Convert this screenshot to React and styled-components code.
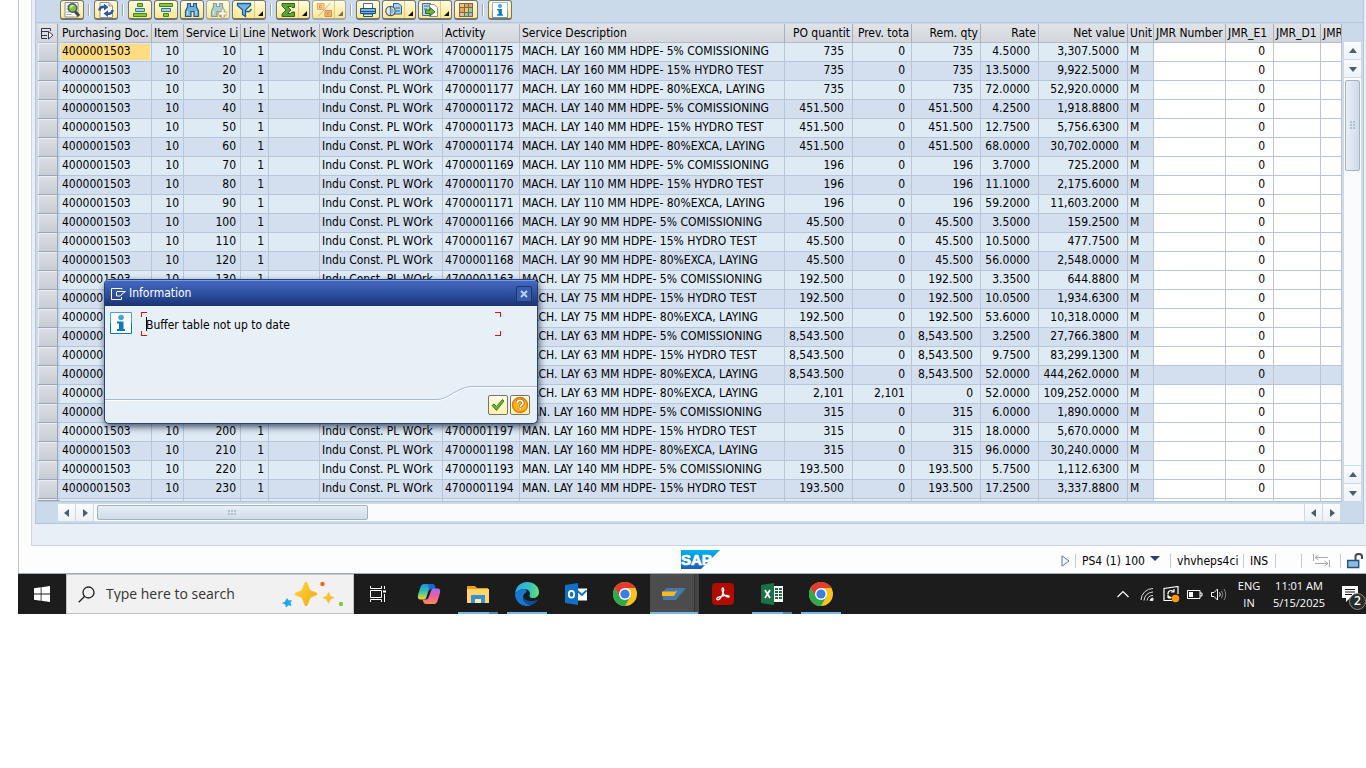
import React, { useState } from 'react'
import styled, { createGlobalStyle, css } from 'styled-components'

const GlobalStyle = createGlobalStyle`
  * { box-sizing: border-box; }
  body {
    margin: 0;
    background: #fff;
    color: #000;
    font-family: "DejaVu Sans Condensed", "Noto Sans", sans-serif;
    font-size: 12px;
    line-height: 16px;
  }
  button, input { font: inherit; margin: 0; padding: 0; }
  svg { display: block; flex: none; }
`

const Page = styled.div`
  position: relative;
  padding-left: 18px;
  overflow: hidden;
`

/* ---------- window ---------- */

const SapWindow = styled.main`
  border-left: 1px solid #b9c6cf;
  border-bottom: 1px solid #9fb0b5;
  background: #fdfdfe;
  padding-left: 12px;
`
const Panel = styled.section`
  border-left: 1px solid #ccd5e4;
  border-bottom: 1px solid #ccd5e4;
  background: #e8eff7;
  padding: 0 2px 21px 3px;
`
const Alv = styled.div`
  background: #cbdaea;
  border: 1px solid #b7c7d8;
  border-top: 0;
`
const ToolBar = styled.div`
  display: flex;
  gap: 2px;
  height: 23px;
  padding-left: 24px;
  border-bottom: 1px solid #b7c7d8;
`
const ToolButton = styled.button`
  display: flex;
  align-items: center;
  justify-content: center;
  gap: 0;
  width: ${p => (p.$split ? 34 : 24)}px;
  height: 20px;
  border: 1px solid ${p => (p.disabled ? '#a9a99f' : '#77756a')};
  border-bottom-width: 2px;
  border-radius: 3px;
  background: linear-gradient(#fffbe0, #fdf0ae 60%, #fbe793);
  ${p => p.disabled && css`svg { opacity: 0.55; }`}
`
const SplitArrow = styled.span`
  display: flex;
  align-items: flex-end;
  justify-content: flex-end;
  align-self: stretch;
  width: 9px;
  margin-left: 1px;
  padding-bottom: 2px;
  border-left: 1px solid #d9cb88;
`
const ToolDivider = styled.span`
  width: 6px;
  height: 12px;
  margin-top: 4px;
  background: linear-gradient(#9aa7b5, #9aa7b5) 2px 0 / 1px 100% no-repeat,
    linear-gradient(#fff, #fff) 3px 0 / 1px 100% no-repeat;
`

/* ---------- grid ---------- */

const GridArea = styled.div`
  display: flex;
  padding: 1px 2px 0 2px;
`
const TableClip = styled.div`
  flex: 1;
  min-width: 0;
  overflow: hidden;
  border-bottom: 1px solid #b3c2d3;
`
const Table = styled.table`
  width: 100%;
  table-layout: fixed;
  border-collapse: separate;
  border-spacing: 0;
`
const Th = styled.th`
  height: 19px;
  padding: 0 ${p => p.$pad || 0}px 0 2px;
  border-right: 1px solid #a9b0ba;
  border-bottom: 1px solid #b4bcc9;
  background: linear-gradient(#e0e3e7, #d3d6db);
  font-weight: normal;
  line-height: 18px;
  text-align: ${p => (p.$right ? 'right' : 'left')};
  white-space: nowrap;
  overflow: hidden;
`
const Td = styled.td`
  height: ${p => (p.$stub ? 2 : 19)}px;
  padding: 0 ${p => p.$pad || 0}px 0 2px;
  border-right: 1px solid #b9c5d8;
  border-bottom: ${p => (p.$stub ? 0 : 1)}px solid #b9c5d8;
  background: ${p => p.$bg};
  line-height: 16px;
  vertical-align: top;
  text-align: ${p => (p.$right ? 'right' : 'left')};
  white-space: nowrap;
  overflow: hidden;
  ${p => p.$current && css`box-shadow: inset 0 0 0 1px #dcebf5;`}
`
const RowMark = styled.td`
  padding: 0;
  border-right: 2px solid #cbdaea;
  border-bottom: 1px solid #9ea7b5;
  background: linear-gradient(#dcdfe4, #c8ccd4);
  box-shadow: inset -1px 0 #9aa3b0, inset 1px 1px #eceef2;
`
const MarkHead = styled.th`
  padding: 0 0 0 2px;
  border-right: 2px solid #cbdaea;
  border-bottom: 1px solid #b4bcc9;
  background: linear-gradient(#e0e3e7, #d3d6db);
  box-shadow: inset -1px 0 #9aa3b0;
`

/* ---------- scroll bars ---------- */

const VScroll = styled.div`
  display: flex;
  flex-direction: column;
  gap: 1px;
  width: 17px;
  margin: 18px 0 1px 2px;
`
const HScroll = styled.div`
  display: flex;
  gap: 1px;
  height: 17px;
  margin: 2px 23px 2px 22px;
`
const ScrollButton = styled.button`
  display: flex;
  align-items: center;
  justify-content: center;
  flex: none;
  width: 17px;
  height: 17px;
  border: 0;
  background: linear-gradient(#fbfcfd, #edf2f7);
`
const Track = styled.div`
  display: flex;
  flex-direction: ${p => (p.$vertical ? 'column' : 'row')};
  flex: 1;
  padding: ${p => (p.$vertical ? '2px 1px' : '1px 3px')};
  background: #fafbfc;
`
const Thumb = styled.div`
  display: flex;
  align-items: center;
  justify-content: center;
  border: 1px solid #a5b2c0;
  border-radius: 2px;
  background: linear-gradient(${p => (p.$vertical ? '90deg' : '180deg')}, #e8f0f7, #cedbe8);
  ${p => (p.$vertical ? 'height: 91px;' : 'width: 20%; min-width: 271px;')}
`

/* ---------- status bar ---------- */

const StatusBar = styled.footer`
  display: grid;
  grid-template-columns: 1fr auto 1fr;
  align-items: center;
  height: 27px;
  padding-left: 3px;
`
const StatusItems = styled.div`
  grid-column: 3;
  display: flex;
  align-items: center;
  justify-content: flex-end;
  padding: 2px 2px 0 0;
`
const StatusCell = styled.div`
  display: flex;
  align-items: center;
  justify-content: ${p => (p.$center ? 'center' : 'flex-start')};
  gap: 5px;
  width: ${p => p.$w}px;
  height: 14px;
  padding-left: ${p => (p.$center ? 0 : 6)}px;
  border-left: 1px solid ${p => (p.$first ? 'transparent' : '#c6cbd3')};
  white-space: nowrap;
`

/* ---------- dialog ---------- */

const Dialog = styled.div`
  position: absolute;
  left: 104px;
  top: 279px;
  width: 434px;
  border: 1px solid #25407c;
  border-radius: 5px;
  background: #e8f0f7;
  box-shadow: 1px 3px 7px rgba(20, 30, 50, 0.75);
  overflow: hidden;
`
const DialogTitle = styled.header`
  display: flex;
  align-items: center;
  gap: 3px;
  height: 26px;
  padding: 0 5px 0 6px;
  border-top: 1px solid #7d9ce0;
  background: linear-gradient(#4468c0, #2c4e9c 55%, #1a3270);
  color: #fff;
  h2 { flex: 1; margin: 0; padding-bottom: 2px; font-size: 12px; font-weight: normal; }
`
const CloseButton = styled.button`
  display: flex;
  align-items: center;
  justify-content: center;
  width: 16px;
  height: 16px;
  border: 1px solid #1c3474;
  border-radius: 2px;
  background: #3a5cab;
`
const DialogBody = styled.div`
  display: flex;
  gap: 9px;
  height: 80px;
  padding: 6px 5px 0;
`
const Message = styled.p`
  position: relative;
  width: 360px;
  height: 24px;
  margin: 0;
  padding: 0 5px;
  line-height: 26px;
`
const Corner = styled.i`
  position: absolute;
  width: 6px;
  height: 5px;
  border: 0 solid #e01010;
  ${p => p.$v}: 0;
  ${p => p.$h}: 0;
  border-${p => p.$v}-width: 1px;
  border-${p => p.$h}-width: 1px;
`
const Caret = styled.i`
  position: absolute;
  left: 5px;
  top: 5px;
  width: 1px;
  height: 14px;
  background: #000;
`
const DialogFoot = styled.div`
  position: relative;
  display: flex;
  justify-content: flex-end;
  gap: 2px;
  height: 37px;
  padding: 9px 7px 0 0;
`
const FootLine = styled.svg`
  position: absolute;
  left: 0;
  top: 0;
`
const DialogButton = styled.button`
  position: relative;
  display: flex;
  align-items: center;
  justify-content: center;
  width: 20px;
  height: 20px;
  border: 1px solid #77756a;
  border-radius: 2px;
  background: linear-gradient(#fffce8, #fdf0a8);
`

/* ---------- taskbar ---------- */

const TaskBar = styled.nav`
  display: flex;
  height: 40px;
  background: #1c1c1c;
  color: #fff;
  font-family: "Open Sans", "Noto Sans", sans-serif;
`
const TaskButton = styled.button`
  position: relative;
  display: flex;
  align-items: center;
  justify-content: center;
  flex: none;
  width: ${p => p.$w || 49}px;
  padding-right: 2px;
  border: 0;
  background: ${p => (p.$active ? 'linear-gradient(90deg, #4c4c4c 44px, #333 44px, #333 45px, #444 45px)' : 'transparent')};
  ${p => p.$running && css`
    &::after {
      content: "";
      position: absolute;
      left: ${p.$active ? 0 : 4}px;
      right: ${p.$active ? 1 : 5}px;
      bottom: 0;
      height: 2px;
      background: ${p.$stacked ? 'linear-gradient(90deg, #76b9ed 31px, #5a84a8 31px)' : '#76b9ed'};
    }
  `}
`
const StartButton = styled(TaskButton)`
  padding-right: 0;
`
const SearchBox = styled.label`
  display: flex;
  align-items: center;
  gap: 11px;
  width: 288px;
  padding: 0 9px 0 11px;
  border: 1px solid #c3c3c3;
  background: #f1f1f1;
  input {
    flex: 1;
    min-width: 0;
    border: 0;
    outline: 0;
    background: transparent;
    font-size: 14px;
  }
  input::placeholder { color: #333; opacity: 1; }
`
const Tray = styled.div`
  display: flex;
  align-items: center;
  gap: 8px;
  margin-left: auto;
`
const TrayText = styled.div`
  width: ${p => p.$w}px;
  font-size: 11px;
  line-height: 17px;
  text-align: center;
  white-space: nowrap;
`
const TrayButton = styled.button`
  display: flex;
  align-items: center;
  justify-content: center;
  width: 16px;
  height: 40px;
  border: 0;
  background: transparent;
`
const Notice = styled(TrayButton)`
  position: relative;
  width: 24px;
  margin-left: 7px;
  color: #fff;
  justify-content: flex-start;
`
const Badge = styled.span`
  position: absolute;
  right: 0;
  bottom: 4px;
  width: 17px;
  height: 17px;
  border: 1px solid #8b8b8b;
  border-radius: 50%;
  background: #2b2b2b;
  font-size: 12px;
  font-weight: 600;
  line-height: 14px;
  text-align: center;
`

/* ---------- toolbar icons ---------- */

const Svg = ({ w = 18, h = 16, children }) => (
  <svg width={w} height={h} viewBox={`0 0 ${w} ${h}`} fill="none" aria-hidden="true">{children}</svg>
)

const DetailIcon = () => (
  <Svg>
    <path d="M2 .5h13v14.500H2z" fill="#fff" stroke="#8a8f94" />
    <path d="M3.500 4h3M3.500 7h2M3.500 10h3M3.500 12.500h5" stroke="#9aa4ac" />
    <circle cx="9.500" cy="6" r="4.200" fill="#7fc241" stroke="#4d5a5f" strokeWidth="1.500" />
    <path d="M7.500 5.500c.4-1.400 1.500-2 2.800-1.800" stroke="#e4f5d0" strokeWidth="1.500" />
    <path d="M12 9.500l4 4.500" stroke="#3f4b50" strokeWidth="3" />
  </Svg>
)
const RefreshIcon = () => (
  <Svg>
    <path d="M3 .5h9l3.500 3.500v11.500H3z" fill="#fff" stroke="#8f959c" />
    <path d="M12 .5V4h3.500" stroke="#8f959c" />
    <path d="M2.500 8.500C2.500 5.500 5 4.500 7.500 5" stroke="#2d5796" strokeWidth="2.600" />
    <path d="M7 1.800L11.500 5.200 7 8.600z" fill="#2d5796" />
    <path d="M15.500 8C15.500 11 13 12.200 10.500 11.600" stroke="#2d5796" strokeWidth="2.600" />
    <path d="M11 8.200L6.500 11.500 11 15z" fill="#2d5796" />
  </Svg>
)
const SortAscIcon = () => (
  <Svg>
    <path d="M6.500 1.500h5v3h-5z" fill="#8cc63f" stroke="#2f8a2a" />
    <path d="M4.500 6.500h9v3h-9z" fill="#a9cbe4" stroke="#3a759e" />
    <path d="M2.500 11.500h13v3h-13z" fill="#8cc63f" stroke="#2f8a2a" />
  </Svg>
)
const SortDescIcon = () => (
  <Svg>
    <path d="M2.500 1.500h13v3h-13z" fill="#8cc63f" stroke="#2f8a2a" />
    <path d="M4.500 6.500h9v3h-9z" fill="#a9cbe4" stroke="#3a759e" />
    <path d="M6.500 11.500h5v3h-5z" fill="#8cc63f" stroke="#2f8a2a" />
  </Svg>
)
const Binoculars = () => (
  <>
    <path d="M4.500 1.500h3v3h3v-3h3V5l2 4v5.500h-4.500V9.500h-3v5H3.500l-1 0V9l2-4z" fill="#6fb0dc" stroke="#1d5e92" strokeWidth="1.200" />
    <path d="M4.500 9v4M13 9v4" stroke="#c5e2f4" strokeWidth="1.200" />
  </>
)
const FindIcon = () => <Svg><Binoculars /></Svg>
const FindNextIcon = () => (
  <Svg>
    <Binoculars />
    <path d="M12.500 7v3h-3v3h3v3h2.500v-3h3v-3h-3V7z" fill="#fff" stroke="#7b8b93" />
  </Svg>
)
const FilterIcon = () => (
  <Svg w={17}>
    <path d="M1.500 1.500h13v2L9.500 8v6.500l-3-2V8l-5-4.500z" fill="#75b3df" stroke="#1d5e92" strokeWidth="1.300" />
    <path d="M10 9.500h3.500l2-2.500" stroke="#1d5e92" strokeWidth="1.300" />
  </Svg>
)
const SumIcon = () => (
  <Svg w={17}>
    <path d="M2 1.500h12.500v4h-2.500L11 4.500H7.500L11 8l-3.500 3.500H11l1-1.500h2.500v4.500H2V12l4-4-4-4z" fill="#5ba33a" stroke="#2c6a1e" />
  </Svg>
)
const SubtotalIcon = () => (
  <Svg w={17}>
    <path d="M1.500 1.500h6.500v6H1.500z" fill="#ffb04a" stroke="#e0682a" />
    <path d="M9 8.500h6.500v6H9z" fill="#f08a3c" stroke="#c0392a" />
    <path d="M6 3.300H3.500v2.500H6M13.500 10.500H11.200v2.200h2.300" stroke="#b0402a" />
    <path d="M2 14.500L14.500 1" stroke="#8a8a8a" />
  </Svg>
)
const PrintIcon = () => (
  <Svg>
    <path d="M4.500 1.500h9v5h-9z" fill="#fff" stroke="#47708f" />
    <path d="M1.500 6.500h15v5h-15z" fill="#79b4dc" stroke="#1d517c" />
    <path d="M2 9.500h14" stroke="#1d517c" />
    <path d="M4.500 12h9v2.500h-9z" fill="#d9ecf8" stroke="#1d517c" />
  </Svg>
)
const ViewIcon = () => (
  <Svg w={18}>
    <path d="M8.500 1.500h5l3 2.500v8h-8z" fill="#a8d2ee" stroke="#2b658f" />
    <path d="M10.500 6h4.500M10.500 9h4.500" stroke="#2b658f" />
    <circle cx="5.500" cy="9" r="4.700" fill="#dfe7ec" stroke="#4c5d69" strokeWidth="1.200" />
    <path d="M5.500 5v8" stroke="#4c5d69" strokeWidth="1.200" />
    <path d="M5.500 6a3 3 0 0 1 0 6" fill="#8bb7d6" />
  </Svg>
)
const ExportIcon = () => (
  <Svg w={18}>
    <path d="M1.500 1.500h8v12h-8z" fill="#b5d7ef" stroke="#47708f" />
    <path d="M3 4h5M3 7h3" stroke="#47708f" />
    <path d="M8.500 2.500h4.500l3.500 3v9h-8z" fill="#fff" stroke="#8a8f94" />
    <path d="M4.500 8H9V5.500L14 9.800 9 14v-2.500H4.500z" fill="#6db33f" stroke="#2c6a1e" />
  </Svg>
)
const LayoutIcon = () => (
  <Svg>
    <path d="M2 1h14v14H2z" fill="#6b6a64" />
    <path d="M3 2h4v3H3zM8 6h3v4H8z" fill="#f7c765" />
    <path d="M8 2h3v3H8zM12 2h3v3h-3zM3 6h4v4H3z" fill="#f0a048" />
    <path d="M12 6h3v4h-3zM8 11h3v3H8z" fill="#9fce70" />
    <path d="M3 11h4v3H3z" fill="#f1b3ad" />
    <path d="M12 11h3v3h-3z" fill="#8bbde4" />
  </Svg>
)
const InfoIcon = ({ size = 16 }) => (
  <svg width={size} height={size} viewBox="0 0 22 22" aria-hidden="true">
    <path d="M1 1h20v20H1z" fill="#fff" />
    <path d="M.500 11V.500h21V11" fill="none" stroke="#4ba3d3" />
    <path d="M.500 11v10.500h21V11" fill="none" stroke="#0a74b5" />
    <circle cx="11" cy="5.500" r="2.800" fill="#4ba3d3" />
    <path d="M7 9.500h6.500V17H15v2H7v-2h2v-5.500H7z" fill="#0a7cbb" />
  </svg>
)
const CornerArrow = () => <svg width="5" height="5" viewBox="0 0 5 5"><path d="M5 0v5H0z" fill="#111" /></svg>

const Arrow = ({ dir }) => {
  const d = {
    up: 'M0 6l4-5 4 5z',
    down: 'M0 2l4 5 4-5z',
    left: 'M6 0L1 4l5 4z',
    right: 'M2 0l5 4-5 4z',
  }[dir]
  return <svg width="8" height="8" viewBox="0 0 8 8" aria-hidden="true"><path d={d} fill="#4a5e70" /></svg>
}

const Grip = ({ vertical }) => {
  const dots = []
  const cols = vertical ? 2 : 3
  const rows = vertical ? 3 : 2
  for (let x = 0; x < cols; x++) {
    for (let y = 0; y < rows; y++) {
      dots.push(<path key={`${x}${y}`} d={`M${x * 3} ${y * 3}h2v2h-2z`} fill="#b3c0cd" />)
    }
  }
  return <svg width={cols * 3} height={rows * 3} aria-hidden="true">{dots}</svg>
}

/* ---------- taskbar icons ---------- */

const LogoSvg = styled.svg`
  grid-column: 2;
`
const SapLogo = () => (
  <LogoSvg width="39" height="19" viewBox="0 0 39 19" role="img" aria-label="SAP">
    <linearGradient id="sapBlue" x2="0" y2="1">
      <stop stopColor="#00b4ee" />
      <stop offset="1" stopColor="#1f5bb8" />
    </linearGradient>
    <path d="M0 0h39L20 19H0z" fill="url(#sapBlue)" />
    <text x="0" y="15" fill="#fff" stroke="#fff" strokeWidth=".7" fontFamily="Liberation Sans, sans-serif" fontWeight="bold" fontSize="15">SAP</text>
  </LogoSvg>
)
const WindowsIcon = () => (
  <svg width="16" height="16" viewBox="0 0 16 16" fill="#fff"><path d="M0 2.200l6.700-.9v6.300H0zM7.500 1.200L16 0v7.600H7.500zM0 8.400h6.700v6.300L0 13.800zM7.500 8.400H16V16l-8.500-1.200z" /></svg>
)
const SparkleIcon = () => (
  <svg width="62" height="28" viewBox="0 0 62 28">
    <linearGradient id="gold" x2="1" y2="1">
      <stop stopColor="#ffd83a" />
      <stop offset="1" stopColor="#f3a712" />
    </linearGradient>
    <path d="M24 2c1.500 0 2.500 7 4.500 8.500S35 12.500 35 14s-5 2-6.500 3.500S25.500 26 24 26s-2.500-7-4.500-8.500S13 15.500 13 14s5-2 6.500-3.500S22.500 2 24 2z" fill="url(#gold)" stroke="url(#gold)" />
    <path d="M46.500 12c.8 0 1.300 3.200 2.200 4.100s3.300.6 3.300 1.600-2.400.8-3.300 1.700-1.400 4-2.200 4-1.300-3.100-2.200-4-3.300-.7-3.300-1.700 2.400-.7 3.300-1.600 1.400-4.100 2.200-4.100z" fill="#fbc02d" />
    <path d="M5 18l1.800 2.500 3-.5-1.300 2.900L9.500 26l-3.200-.8L4 27.500l-.8-3L0 23l2.900-1.200z" fill="#1ea7ee" />
    <circle cx="40.500" cy="4" r="2.200" fill="#f26522" />
    <circle cx="59" cy="24" r="2.200" fill="#8bc34a" />
  </svg>
)
const TaskViewIcon = () => (
  <svg width="17" height="16" viewBox="0 0 17 16" fill="none" stroke="#fff">
    <path d="M.500 0v2.500h11V0M.500 16v-2.500h11V16M.500 4.500h11v7H.500zM14.500 0v3M14.500 8v8" />
    <path d="M13 4.500h3v2h-3z" fill="#fff" stroke="none" />
  </svg>
)
const CopilotIcon = () => (
  <svg width="24" height="22" viewBox="0 0 24 22">
    <linearGradient id="copA" x2="0" y2="1">
      <stop stopColor="#1b8bf0" />
      <stop offset=".5" stopColor="#35c4a0" />
      <stop offset="1" stopColor="#f7d52e" />
    </linearGradient>
    <linearGradient id="copB" x2="0" y2="1">
      <stop stopColor="#a56af0" />
      <stop offset=".5" stopColor="#ee5fa0" />
      <stop offset="1" stopColor="#ff8a4a" />
    </linearGradient>
    <path d="M7 1h8c2 0 2.500 1.500 3 3l.5 2h-4c-2 0-2.700 1-3.200 2.500L9.500 14c-.5 1.500-1.200 2.500-3 2.500H3.500C1 16.500.500 14.500 1 12L3.500 4C4.200 2 5.200 1 7 1z" fill="url(#copA)" />
    <path d="M11 1h4c2 0 2.500 1.500 3 3l.5 2h-4c-1 0-2 .5-2.500 1.500z" fill="#1767d2" />
    <path d="M17 21H9c-2 0-2.500-1.500-3-3l-.5-1.500h3c2 0 2.700-1 3.200-2.500L14 8c.5-1.500 1.200-2.500 3-2.500h3.500C23 5.500 23.500 7.500 23 10l-2.500 8c-.7 2-1.700 3-3.500 3z" fill="url(#copB)" />
    <path d="M13 8.500l-2.500 7c-.3.700-.7 1-1 1l1.500-5.500 1-2.500z" fill="#1c1c1c" />
  </svg>
)
const FolderIcon = () => (
  <svg width="22" height="19" viewBox="0 0 22 19">
    <path d="M0 1h8l2 2h11v4H0z" fill="#e6a117" />
    <path d="M0 4h22v14H0z" fill="#ffd667" />
    <path d="M4 10h14v8h-4v-4H8v4H4z" fill="#3b8ed8" />
    <path d="M8 14h6v4H8z" fill="#ffe9a6" />
  </svg>
)
const EdgeIcon = () => (
  <svg width="24" height="24" viewBox="0 0 24 24">
    <linearGradient id="edgeTop">
      <stop stopColor="#2ea7e8" />
      <stop offset=".6" stopColor="#35c1c0" />
      <stop offset="1" stopColor="#6ce06a" />
    </linearGradient>
    <path d="M12 0c7 0 12 4.500 12 10 0 4-3 6-6 6-3.500 0-4.500-1.500-3.500-3C16 10 13 7 9.500 7 5 7 1.500 9.500.2 11.500.500 5 5.500 0 12 0z" fill="url(#edgeTop)" />
    <path d="M9.500 7C4 7 0 10.500 0 13c.5 6.500 6 11 12 11 2 0 3-.3 4-.8C10 22 8 18.500 8 15.500c0-2.500 1.500-4.500 3.500-5.200.8-.3-.5-3.300-2-3.300z" fill="#1679cf" />
    <path d="M8 14.500c-.3 4.500 3 8.300 8 8.700 3-1 5.300-3.200 6.300-4.700.4-.6 0-.8-.5-.5-4.500 2-11.800 1.500-13.800-3.500z" fill="#0c4f9a" />
    <path d="M11.500 10.300c-1.900 1.400-1.900 4.700.3 6.700 2 1.600 5.500 2 8 1.200-1 .2-2.500-.3-3.800-2.200-1.500-.6-2-1.500-1.500-3 .4-1.200-1-3-3-2.700z" fill="#1c1c1c" />
  </svg>
)
const OutlookIcon = () => (
  <svg width="22" height="22" viewBox="0 0 22 22">
    <path d="M12 5.500h10v12H12z" fill="#fff" />
    <path d="M12.500 8l4.500 4 4.500-4.500" fill="none" stroke="#0f70c4" strokeWidth="1.800" />
    <path d="M0 2l13-2v22L0 20z" fill="#0f70c4" />
    <ellipse cx="6.500" cy="11.200" rx="2.700" ry="3.400" fill="none" stroke="#fff" strokeWidth="1.800" />
  </svg>
)
const ChromeIcon = () => (
  <svg width="24" height="24" viewBox="0 0 24 24">
    <circle cx="12" cy="12" r="12" fill="#fbc21d" />
    <path d="M12 6h10.400A12 12 0 0 0 1.600 6l5.200 9z" fill="#e33b2e" />
    <path d="M6.800 15L1.600 6A12 12 0 0 0 12 24l5.200-9z" fill="#2da94f" />
    <circle cx="12" cy="12" r="6" fill="#fff" />
    <circle cx="12" cy="12" r="4.600" fill="#3b7de9" />
  </svg>
)
const LogonIcon = () => (
  <svg width="24" height="14" viewBox="0 0 24 14">
    <path d="M4 1h20L14 13H1V9h10l3-3H0z" fill="#4678ad" />
    <path d="M0 4.500h13.500l2-1-3.500 5.500H0z" fill="#fbb81b" />
  </svg>
)
const AcrobatIcon = () => (
  <svg width="22" height="22" viewBox="0 0 22 22">
    <rect width="22" height="22" rx="4" fill="#b30b00" />
    <path d="M5 16.500c-1.200-1 1-2.800 6-3.700 4-.7 6.500-.2 6.200.8-.5 1.300-4.200-.3-5.700-2.600-1.500-2.200-2-5.800-.8-6 1.300-.2 1.300 3.500-.4 7-1.700 3.600-4 5.500-5.300 4.500z" fill="none" stroke="#fff" strokeWidth="1.300" />
  </svg>
)
const ExcelIcon = () => (
  <svg width="22" height="22" viewBox="0 0 22 22">
    <path d="M12 3h10v16H12z" fill="#fff" />
    <path d="M14 5h3v2h-3zM14 8h3v2h-3zM14 11h3v2h-3zM14 14h3v2h-3zM18 5h3v2h-3zM18 8h3v2h-3zM18 11h3v2h-3zM18 14h3v2h-3z" fill="#1e7145" />
    <path d="M0 2l13-2v22L0 20z" fill="#1e7145" />
    <path d="M4 7l5 8M9 7l-5 8" stroke="#fff" strokeWidth="1.800" />
  </svg>
)

/* ---------- data ---------- */

const COLUMNS = [
  { key: 'doc', label: 'Purchasing Doc.', w: 92 },
  { key: 'item', label: 'Item', w: 32, right: true, pad: 4, headLeft: true },
  { key: 'service', label: 'Service Li', w: 57, right: true, pad: 4, headLeft: true },
  { key: 'line', label: 'Line', w: 28, right: true, pad: 4, headLeft: true },
  { key: 'network', label: 'Network', w: 51 },
  { key: 'work', label: 'Work Description', w: 123 },
  { key: 'activity', label: 'Activity', w: 77 },
  { key: 'desc', label: 'Service Description', w: 265 },
  { key: 'po', label: 'PO quantit', w: 68, right: true, pad: 8 },
  { key: 'prev', label: 'Prev. tota', w: 59, right: true, pad: 6 },
  { key: 'rem', label: 'Rem. qty', w: 69, right: true, pad: 7 },
  { key: 'rate', label: 'Rate', w: 58, right: true, pad: 8 },
  { key: 'net', label: 'Net value', w: 89, right: true, pad: 8 },
  { key: 'unit', label: 'Unit', w: 26 },
  { key: 'jmr', label: 'JMR Number', w: 72, open: true },
  { key: 'e1', label: 'JMR_E1', w: 48, right: true, pad: 8, headLeft: true, open: true },
  { key: 'd1', label: 'JMR_D1', w: 47, open: true },
  { key: 'jmr2', label: 'JMR', open: true },
]

const STEPS = ['5% COMISSIONING', '15% HYDRO TEST', '80%EXCA, LAYING']

// service no, activity suffix, method + diameter, step, po, prev, rem, rate, net
const LINES = [
  [10, 175, 'MACH. LAY 160', 0, '735', '0', '735', '4.5000', '3,307.5000'],
  [20, 176, 'MACH. LAY 160', 1, '735', '0', '735', '13.5000', '9,922.5000'],
  [30, 177, 'MACH. LAY 160', 2, '735', '0', '735', '72.0000', '52,920.0000'],
  [40, 172, 'MACH. LAY 140', 0, '451.500', '0', '451.500', '4.2500', '1,918.8800'],
  [50, 173, 'MACH. LAY 140', 1, '451.500', '0', '451.500', '12.7500', '5,756.6300'],
  [60, 174, 'MACH. LAY 140', 2, '451.500', '0', '451.500', '68.0000', '30,702.0000'],
  [70, 169, 'MACH. LAY 110', 0, '196', '0', '196', '3.7000', '725.2000'],
  [80, 170, 'MACH. LAY 110', 1, '196', '0', '196', '11.1000', '2,175.6000'],
  [90, 171, 'MACH. LAY 110', 2, '196', '0', '196', '59.2000', '11,603.2000'],
  [100, 166, 'MACH. LAY 90', 0, '45.500', '0', '45.500', '3.5000', '159.2500'],
  [110, 167, 'MACH. LAY 90', 1, '45.500', '0', '45.500', '10.5000', '477.7500'],
  [120, 168, 'MACH. LAY 90', 2, '45.500', '0', '45.500', '56.0000', '2,548.0000'],
  [130, 163, 'MACH. LAY 75', 0, '192.500', '0', '192.500', '3.3500', '644.8800'],
  [140, 164, 'MACH. LAY 75', 1, '192.500', '0', '192.500', '10.0500', '1,934.6300'],
  [150, 165, 'MACH. LAY 75', 2, '192.500', '0', '192.500', '53.6000', '10,318.0000'],
  [160, 160, 'MACH. LAY 63', 0, '8,543.500', '0', '8,543.500', '3.2500', '27,766.3800'],
  [170, 161, 'MACH. LAY 63', 1, '8,543.500', '0', '8,543.500', '9.7500', '83,299.1300'],
  [180, 162, 'MACH. LAY 63', 2, '8,543.500', '0', '8,543.500', '52.0000', '444,262.0000'],
  [180, 162, 'MACH. LAY 63', 2, '2,101', '2,101', '0', '52.0000', '109,252.0000'],
  [190, 196, 'MAN. LAY 160', 0, '315', '0', '315', '6.0000', '1,890.0000'],
  [200, 197, 'MAN. LAY 160', 1, '315', '0', '315', '18.0000', '5,670.0000'],
  [210, 198, 'MAN. LAY 160', 2, '315', '0', '315', '96.0000', '30,240.0000'],
  [220, 193, 'MAN. LAY 140', 0, '193.500', '0', '193.500', '5.7500', '1,112.6300'],
  [230, 194, 'MAN. LAY 140', 1, '193.500', '0', '193.500', '17.2500', '3,337.8800'],
]

const rows = LINES.map(([service, act, lay, step, po, prev, rem, rate, net]) => ({
  doc: '4000001503',
  item: 10,
  service,
  line: 1,
  work: 'Indu Const. PL WOrk',
  activity: `4700001${act}`,
  desc: `${lay} MM HDPE- ${STEPS[step]}`,
  po, prev, rem, rate, net,
  unit: 'M',
  e1: '0',
}))

const SELECTED_ROW = 17

const cellColor = (col, index) => {
  if (index === 0 && col.key === 'doc') return '#ffdc82'
  if (col.open && index !== SELECTED_ROW) return '#fff'
  return index % 2 ? '#d3dfef' : '#deebf5'
}

const TOOLS = [
  { name: 'Details', icon: DetailIcon },
  null,
  { name: 'Refresh', icon: RefreshIcon },
  null,
  { name: 'Sort ascending', icon: SortAscIcon },
  { name: 'Sort descending', icon: SortDescIcon },
  { name: 'Find', icon: FindIcon },
  { name: 'Find next', icon: FindNextIcon, disabled: true },
  { name: 'Filter', icon: FilterIcon, split: true },
  null,
  { name: 'Total', icon: SumIcon, split: true },
  { name: 'Subtotals', icon: SubtotalIcon, split: true, disabled: true },
  null,
  { name: 'Print', icon: PrintIcon },
  { name: 'Views', icon: ViewIcon, split: true },
  { name: 'Export', icon: ExportIcon, split: true },
  { name: 'Layout', icon: LayoutIcon },
  null,
  { name: 'Information', icon: InfoIcon },
]

const APPS = [
  { name: 'Copilot', icon: CopilotIcon },
  { name: 'File Explorer', icon: FolderIcon, running: true, stacked: true },
  { name: 'Edge', icon: EdgeIcon, running: true },
  { name: 'Outlook', icon: OutlookIcon },
  { name: 'Chrome', icon: ChromeIcon },
  { name: 'SAP Logon', icon: LogonIcon, running: true, active: true },
  { name: 'Acrobat', icon: AcrobatIcon },
  { name: 'Excel', icon: ExcelIcon, running: true, stacked: true },
  { name: 'Chrome window', icon: ChromeIcon, running: true },
]

function ServiceTable() {
  return (
    <Table>
      <colgroup>
        <col width="22" />
        {COLUMNS.map(c => <col key={c.key} width={c.w} />)}
      </colgroup>
      <thead>
        <tr>
          <MarkHead aria-label="Select all">
            <svg width="14" height="13" viewBox="0 0 14 13" fill="none" stroke="#33334a">
              <path d="M7 11.500H1.500v-10h9V4M1.500 4.500h7M1.500 8.500H7" />
              <path d="M8.500 4.500v7.500l4.500-3.800z" fill="#fff" />
            </svg>
          </MarkHead>
          {COLUMNS.map(c => (
            <Th key={c.key} $right={c.right && !c.headLeft} $pad={c.right && !c.headLeft ? 2 : 0}>{c.label}</Th>
          ))}
        </tr>
      </thead>
      <tbody>
        {rows.map((row, i) => (
          <tr key={i}>
            <RowMark />
            {COLUMNS.map(c => (
              <Td key={c.key} $right={c.right} $pad={c.pad} $bg={cellColor(c, i)} $current={i === 0 && c.key === 'doc'}>
                {row[c.key]}
              </Td>
            ))}
          </tr>
        ))}
        <tr>
          <RowMark />
          {COLUMNS.map(c => <Td key={c.key} $stub $bg={cellColor(c, rows.length)} />)}
        </tr>
      </tbody>
    </Table>
  )
}

function InfoDialog({ onClose }) {
  return (
    <Dialog role="dialog" aria-labelledby="dialogTitle">
      <DialogTitle>
        <svg width="15" height="12" viewBox="0 0 15 12" fill="none" stroke="#fff">
          <path d="M11 1.500V.500H.500v11h10V9" />
          <path d="M5.500 4v4h4l1.500-2 3.500-2.500H6z" />
        </svg>
        <h2 id="dialogTitle">Information</h2>
        <CloseButton aria-label="Close" onClick={onClose}>
          <svg width="8" height="8" viewBox="0 0 8 8"><path d="M1 1l6 6M7 1L1 7" stroke="#b9d0ff" strokeWidth="2" /></svg>
        </CloseButton>
      </DialogTitle>
      <DialogBody>
        <InfoIcon size={22} />
        <Message>
          Buffer table not up to date
          <Caret />
          <Corner $v="top" $h="left" />
          <Corner $v="top" $h="right" />
          <Corner $v="bottom" $h="left" />
          <Corner $v="bottom" $h="right" />
        </Message>
      </DialogBody>
      <DialogFoot>
        <FootLine width="432" height="18" viewBox="0 0 432 18" fill="none">
          <path d="M0 14.500h332c12 0 20-13 36-13h64" stroke="#fff" />
          <path d="M0 13.500h332c12 0 20-13 36-13h64" stroke="#aab8cc" />
        </FootLine>
        <DialogButton aria-label="Continue" onClick={onClose}>
          <svg width="14" height="14" viewBox="0 0 14 14"><path d="M1 7.500l2-1.500 2.500 2.500L11.500 1.500 13 3 5.500 12.500z" fill="#6cb52d" stroke="#3c7d2a" /></svg>
        </DialogButton>
        <DialogButton aria-label="Help">
          <svg width="18" height="18" viewBox="0 0 18 18">
            <circle cx="9" cy="9" r="7.500" fill="#fcb514" stroke="#dd7a10" strokeWidth="1.400" />
            <path d="M6.200 7.200C6.200 3.600 12 3.600 12 7c0 2-2.700 2-2.700 4" fill="none" stroke="#a8580a" strokeWidth="3.200" />
            <path d="M6.200 7.200C6.200 3.600 12 3.600 12 7c0 2-2.700 2-2.700 4" fill="none" stroke="#fff" strokeWidth="1.800" />
            <circle cx="9.200" cy="13" r="1.300" fill="#fff" stroke="#a8580a" strokeWidth=".5" />
          </svg>
        </DialogButton>
      </DialogFoot>
    </Dialog>
  )
}

function Status() {
  return (
    <StatusBar>
      <SapLogo />
      <StatusItems>
        <StatusCell $w={21} $first>
          <svg width="9" height="12" viewBox="0 0 9 12"><path d="M1 .800v10.400L8 6z" fill="#f2f7fb" stroke="#5f7d9c" /></svg>
        </StatusCell>
        <StatusCell $w={95}>
          PS4 (1) 100
          <svg width="10" height="9" viewBox="0 0 10 9"><path d="M0 0h10L5 5z" fill="#2b3e78" /></svg>
        </StatusCell>
        <StatusCell $w={73}>vhvheps4ci</StatusCell>
        <StatusCell $w={32}>INS</StatusCell>
        <StatusCell $w={26} />
        <StatusCell $w={39} $center>
          <svg width="17" height="13" viewBox="0 0 17 13" fill="none" stroke="#a9a9a9">
            <path d="M.500 0v7M2 3.500h13M5.500 1L2 3.500 5.500 6M16.500 6v7M2 9.500h13M11.500 7L15 9.500 11.500 12" />
          </svg>
        </StatusCell>
        <StatusCell $w={24}>
          <svg width="17" height="16" viewBox="0 0 17 16">
            <path d="M8.500 7V3.500C8.500 0 15 0 15 3.500V6" fill="none" stroke="#4d4d4d" strokeWidth="2" />
            <path d="M.700 7.500h11v7H.700z" fill="#8dbbe0" stroke="#1e5580" strokeWidth="1.400" />
          </svg>
        </StatusCell>
      </StatusItems>
    </StatusBar>
  )
}

function WindowsTaskBar() {
  return (
    <TaskBar>
      <StartButton $w={48} aria-label="Start"><WindowsIcon /></StartButton>
      <SearchBox>
        <svg width="17" height="17" viewBox="0 0 17 17" fill="none" stroke="#222" strokeWidth="1.300">
          <circle cx="10.500" cy="6.500" r="5.500" />
          <path d="M6.500 10.500L.700 16.300" />
        </svg>
        <input type="text" placeholder="Type here to search" aria-label="Search" />
        <SparkleIcon />
      </SearchBox>
      <TaskButton $w={51} aria-label="Task view"><TaskViewIcon /></TaskButton>
      {APPS.map(app => (
        <TaskButton key={app.name} aria-label={app.name} $running={app.running} $stacked={app.stacked} $active={app.active}>
          <app.icon />
        </TaskButton>
      ))}
      <Tray>
        <TrayButton aria-label="Show hidden icons">
          <svg width="12" height="8" viewBox="0 0 12 8" fill="none" stroke="#fff" strokeWidth="1.200"><path d="M.500 7L6 1.500 11.500 7" /></svg>
        </TrayButton>
        <TrayButton aria-label="Network">
          <svg width="14" height="14" viewBox="0 0 14 14" fill="none" stroke="#ddd">
            <path d="M1 13A12 12 0 0 1 13 1.500M4 13.500A9 9 0 0 1 13 5M7 13.500a6 6 0 0 1 6-5" />
            <path d="M10 13.500a3 3 0 0 1 3-2.500v2.500z" fill="#fff" />
          </svg>
        </TrayButton>
        <TrayButton aria-label="Updates">
          <svg width="17" height="17" viewBox="0 0 17 17" fill="none" stroke="#fff" strokeWidth="1.200">
            <path d="M9 14.500H1V2.500l14-2V8" />
            <path d="M11 6C8.500 3 4.500 5 5 8.500M11 3v3H8M5 12h3M5 9v3M5 10c1 1 2 1.500 3.500 1.500" />
            <circle cx="12.500" cy="12.500" r="3.800" fill="#ff9800" stroke="none" />
          </svg>
        </TrayButton>
        <TrayButton aria-label="Battery">
          <svg width="16" height="9" viewBox="0 0 16 9" fill="none" stroke="#fff"><path d="M.500 .500h12.500v8H.500zM13 3h2v3h-2" /><path d="M2 2h4v5H2z" fill="#fff" stroke="none" /></svg>
        </TrayButton>
        <TrayButton aria-label="Volume">
          <svg width="16" height="13" viewBox="0 0 16 13" fill="none" stroke="#fff">
            <path d="M.500 4.500H3L6.500 1v11L3 8.500H.500zM8.500 4.500q1.500 2 0 4" />
            <path d="M10.500 2.800q2.500 3.700 0 7.400M13 1q3.500 5.500 0 11" stroke="#8a8a8a" />
          </svg>
        </TrayButton>
        <TrayText $w={28}>ENG<br />IN</TrayText>
        <TrayText $w={56}>11:01 AM<br />5/15/2025</TrayText>
        <Notice aria-label="Notifications">
          <svg width="17" height="16" viewBox="0 0 17 16"><path d="M0 0h16v12H8l-4 4v-4H0z" fill="#fff" /><path d="M3 3.500h10M3 6h10M3 8.500h7" stroke="#1c1c1c" /></svg>
          <Badge>2</Badge>
        </Notice>
      </Tray>
    </TaskBar>
  )
}

export default function App() {
  const [open, setOpen] = useState(true)

  return (
    <Page>
      <GlobalStyle />
      <SapWindow>
        <Panel>
          <Alv>
            <ToolBar role="toolbar">
              {TOOLS.map((tool, i) => tool ? (
                <ToolButton key={i} aria-label={tool.name} $split={tool.split} disabled={tool.disabled}>
                  <tool.icon />
                  {tool.split && <SplitArrow><CornerArrow /></SplitArrow>}
                </ToolButton>
              ) : <ToolDivider key={i} />)}
            </ToolBar>
            <GridArea>
              <TableClip><ServiceTable /></TableClip>
              <VScroll>
                <ScrollButton aria-label="Line up"><Arrow dir="up" /></ScrollButton>
                <ScrollButton aria-label="Line down"><Arrow dir="down" /></ScrollButton>
                <Track $vertical><Thumb $vertical><Grip vertical /></Thumb></Track>
                <ScrollButton aria-label="Page up"><Arrow dir="up" /></ScrollButton>
                <ScrollButton aria-label="Page down"><Arrow dir="down" /></ScrollButton>
              </VScroll>
            </GridArea>
            <HScroll>
              <ScrollButton aria-label="Column left"><Arrow dir="left" /></ScrollButton>
              <ScrollButton aria-label="Column right"><Arrow dir="right" /></ScrollButton>
              <Track><Thumb><Grip /></Thumb></Track>
              <ScrollButton aria-label="Page left"><Arrow dir="left" /></ScrollButton>
              <ScrollButton aria-label="Page right"><Arrow dir="right" /></ScrollButton>
            </HScroll>
          </Alv>
        </Panel>
        <Status />
      </SapWindow>
      <WindowsTaskBar />
      {open && <InfoDialog onClose={() => setOpen(false)} />}
    </Page>
  )
}
